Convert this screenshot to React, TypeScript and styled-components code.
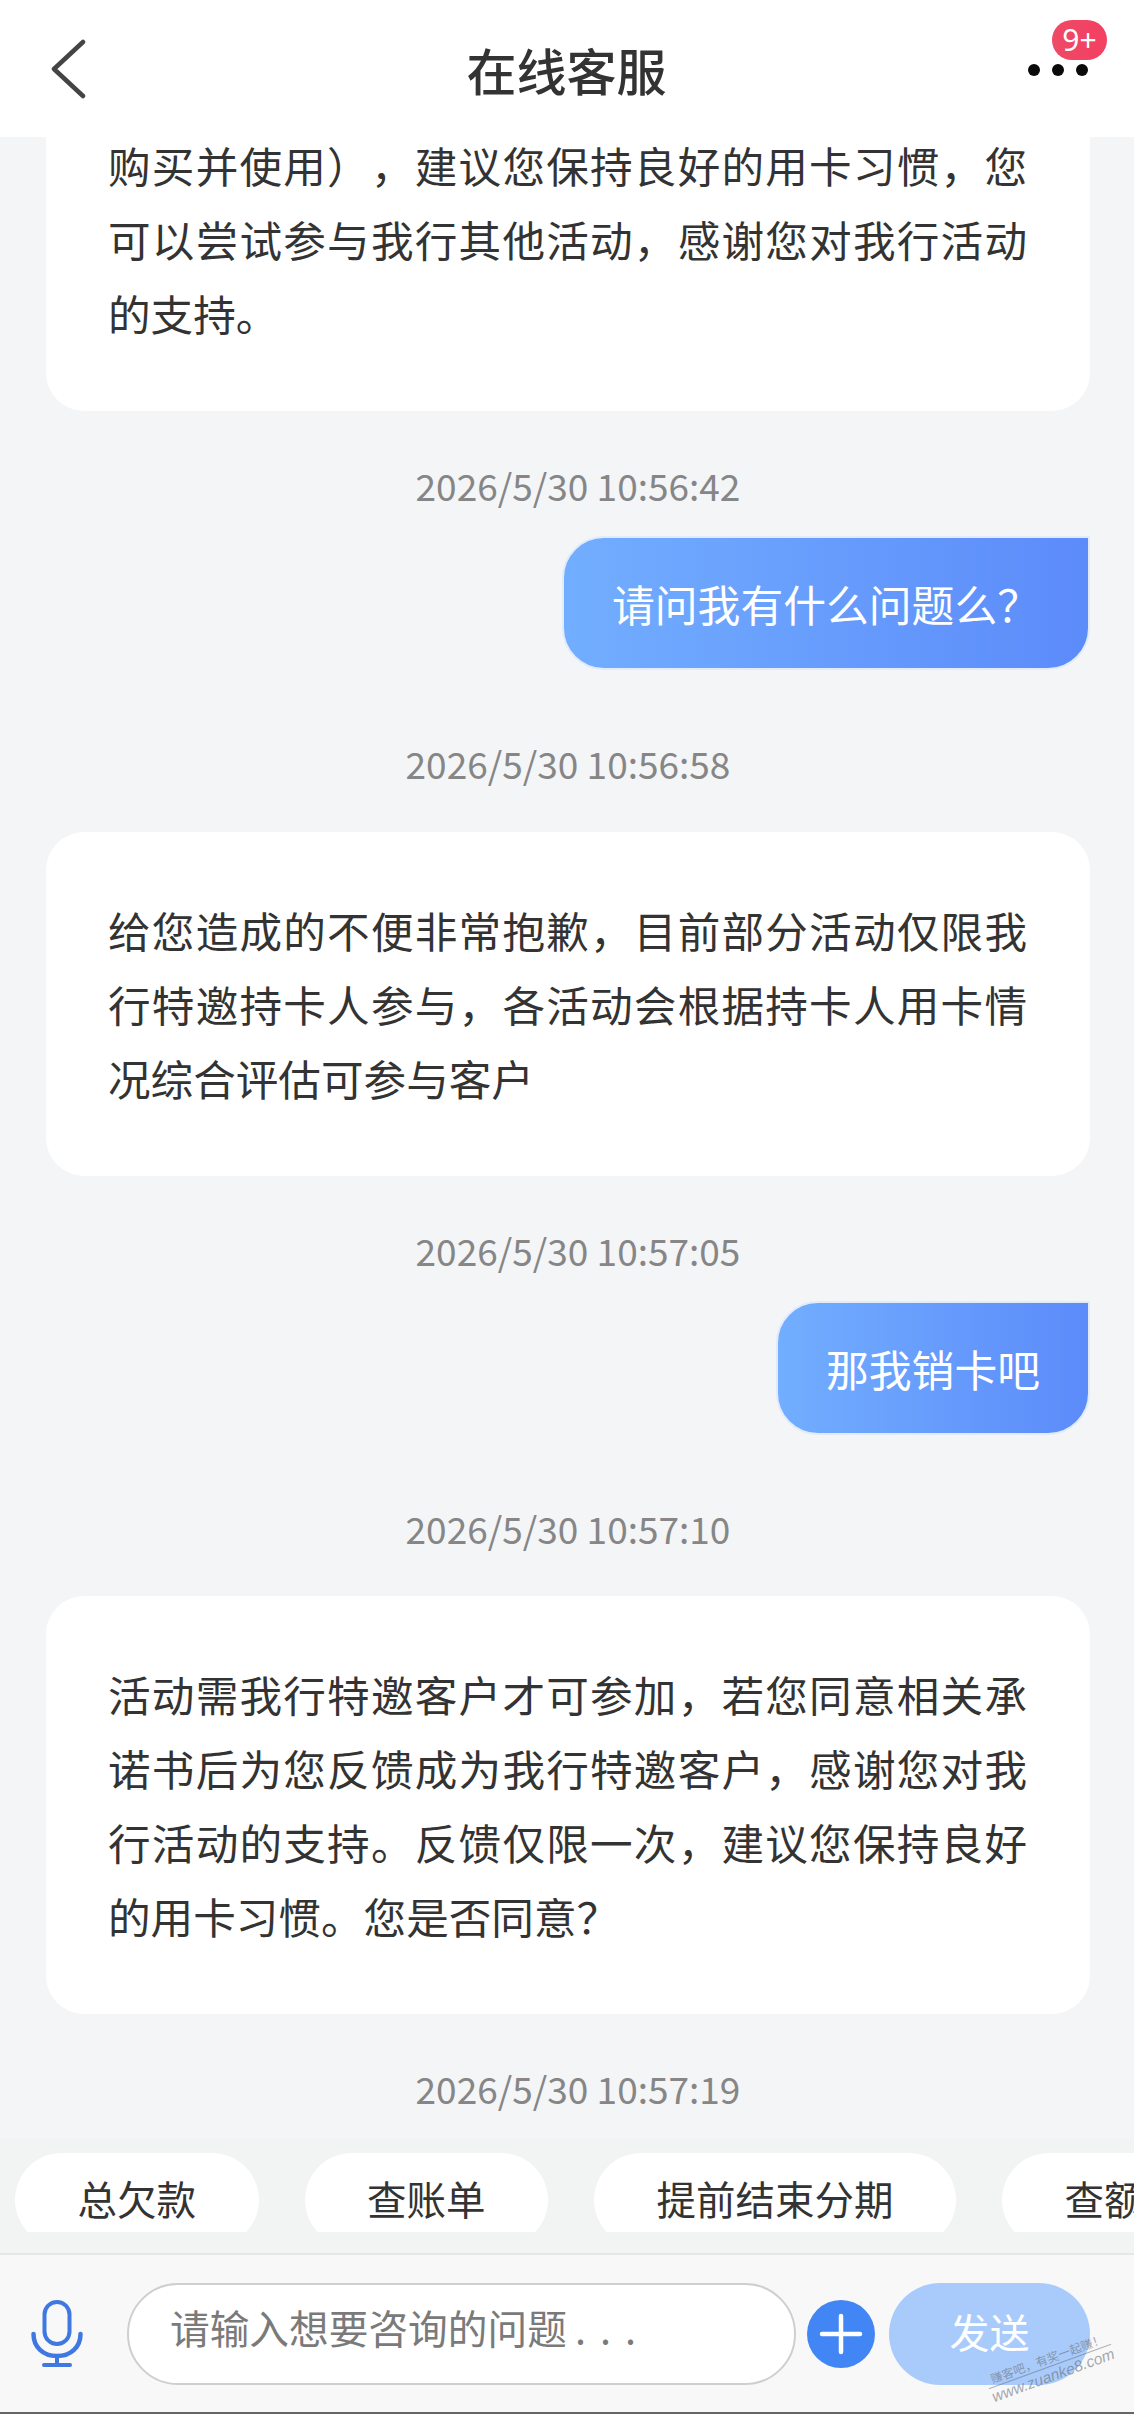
import React from "react";
import styled, { createGlobalStyle } from "styled-components";

const Global = createGlobalStyle`
  html, body { margin: 0; padding: 0; background: #f4f5f7; }
  body { font-family: "Noto Sans CJK SC", "Noto Sans", sans-serif; }
`;

const Page = styled.div`
  position: relative;
  width: 1134px;
  height: 2414px;
  display: flex;
  flex-direction: column;
  overflow: hidden;
  background: #f4f5f7;
  color: #333;
`;

const Header = styled.header`
  flex: 0 0 137px;
  position: relative;
  z-index: 1;
  display: grid;
  grid-template-columns: 1fr auto 1fr;
  align-items: center;
  padding: 0 46px 0 49px;
  background: #fff;
`;

const Title = styled.h1`
  margin: 0;
  font-size: 50px;
  line-height: 1;
  font-weight: 500;
  color: #333;
  position: relative;
  left: -2px;
`;

const BackIcon = styled.svg`
  width: 38px;
  height: 60px;
  display: block;
`;

const More = styled.div`
  position: relative;
  justify-self: end;
  width: 60px;
  display: flex;
  justify-content: space-between;
  padding-top: 3px;
`;

const Dot = styled.span`
  width: 12px;
  height: 12px;
  border-radius: 50%;
  background: #0a0a0a;
`;

const Badge = styled.span`
  position: absolute;
  left: 24px;
  top: -41px;
  width: 55px;
  height: 40px;
  border-radius: 20px;
  background: linear-gradient(90deg, #ee4a66, #f43f62);
  color: #fff;
  font-size: 30px;
  line-height: 40px;
  text-align: center;
  font-family: "Noto Sans", sans-serif;
`;

const Feed = styled.main`
  flex: 1 1 0;
  min-height: 0;
  overflow: hidden;
  display: flex;
  flex-direction: column;
  padding: 0 44px 0 46px;
`;

const Card = styled.section<{ $clipped?: boolean }>`
  flex: none;
  background: #fff;
  border-radius: ${(p) => (p.$clipped ? "0 0 38px 38px" : "38px")};
  margin-top: ${(p) => (p.$clipped ? "-9px" : "17.5px")};
  padding: ${(p) => (p.$clipped ? "0" : "61px")} 63px 61px 62px;
`;

const Paragraph = styled.p`
  margin: 0;
  font-size: 42.6px;
  line-height: 74px;
  color: #333;
  text-align: justify;
  text-justify: inter-character;
  text-spacing-trim: space-all;
`;

const Time = styled.div<{ $outgoing?: boolean }>`
  flex: none;
  height: 44px;
  line-height: 44px;
  margin-top: 52px;
  margin-bottom: 29px;
  text-align: center;
  font-size: 37px;
  color: #868686;
  padding-left: ${(p) => (p.$outgoing ? "20px" : "0")};
`;

const Bubble = styled.div`
  flex: none;
  align-self: flex-end;
  box-sizing: border-box;
  height: 134px;
  margin-bottom: 19px;
  padding: 0 48px;
  display: flex;
  align-items: center;
  font-size: 42.8px;
  line-height: 74px;
  white-space: nowrap;
  color: #fff;
  background: linear-gradient(90deg, #72aeff, #5c8bfa);
  border: 2px solid #e1ebfb;
  border-radius: 42px 0 42px 42px;
`;

const QuickBar = styled.div`
  flex: 0 0 116px;
  box-sizing: border-box;
  padding-top: 14px;
  background: #f2f3f3;
  border-bottom: 2px solid #e6e6e6;
  overflow: hidden;
`;

const Chips = styled.div`
  display: flex;
  gap: 46px;
  height: 79px;
  padding-left: 15px;
  overflow: hidden;
`;

const Chip = styled.span`
  flex: none;
  height: 94px;
  padding: 0 62.5px;
  border-radius: 47px;
  background: #fff;
  font-size: 39.5px;
  line-height: 90px;
  color: #333;
`;

const InputBar = styled.div`
  flex: 0 0 159px;
  box-sizing: border-box;
  display: flex;
  align-items: center;
  padding: 0 44px 0 31px;
  background: #f8f8f8;
  border-bottom: 2px solid #666;
`;

const MicIcon = styled.svg`
  width: 52px;
  height: 67px;
  flex: none;
  margin-right: 44px;
`;

const Field = styled.div`
  flex: none;
  box-sizing: border-box;
  width: 669px;
  height: 102px;
  border: 2px solid #cfcfcf;
  border-radius: 51px;
  background: #fff;
  padding-left: 41px;
  font-size: 39.7px;
  line-height: 84px;
  color: #7a7a7a;
  white-space: nowrap;
`;

const Ellipsis = styled.span`
  letter-spacing: 14px;
  margin-left: 8px;
`;

const PlusIcon = styled.svg`
  width: 68px;
  height: 68px;
  flex: none;
  margin-left: 11px;
`;

const Send = styled.button`
  flex: none;
  width: 201px;
  height: 102px;
  margin-left: 14px;
  border: 0;
  padding: 0 0 6px;
  border-radius: 51px;
  background: #a9cbfb;
  color: #fff;
  font-family: inherit;
  font-size: 40px;
`;

const Watermark = styled.div`
  position: absolute;
  left: 985px;
  top: 2349px;
  width: 130px;
  transform: rotate(-20deg);
  transform-origin: center;
  color: rgba(105, 110, 120, 0.6);
  text-align: center;
  white-space: nowrap;
`;

const MarkTop = styled.div`
  font-size: 12px;
  line-height: 17px;
  border-bottom: 1px solid rgba(105, 110, 120, 0.5);
`;

const MarkBottom = styled.div`
  font-size: 15.5px;
  line-height: 17px;
  font-family: "Liberation Sans", sans-serif;
  font-style: italic;
`;

export default function App() {
  return (
    <Page>
      <Global />
      <Header>
        <BackIcon viewBox="0 0 38 60" fill="none">
          <path d="M34 3 L5 30 L34 57" stroke="#444" strokeWidth="4.5" strokeLinecap="round" strokeLinejoin="round" />
        </BackIcon>
        <Title>在线客服</Title>
        <More>
          <Dot />
          <Dot />
          <Dot />
          <Badge>9+</Badge>
        </More>
      </Header>
      <Feed>
        <Card $clipped>
          <Paragraph>购买并使用），建议您保持良好的用卡习惯，您可以尝试参与我行其他活动，感谢您对我行活动的支持。</Paragraph>
        </Card>
        <Time $outgoing>2026/5/30 10:56:42</Time>
        <Bubble>请问我有什么问题么？</Bubble>
        <Time>2026/5/30 10:56:58</Time>
        <Card>
          <Paragraph>给您造成的不便非常抱歉，目前部分活动仅限我行特邀持卡人参与，各活动会根据持卡人用卡情况综合评估可参与客户</Paragraph>
        </Card>
        <Time $outgoing>2026/5/30 10:57:05</Time>
        <Bubble>那我销卡吧</Bubble>
        <Time>2026/5/30 10:57:10</Time>
        <Card>
          <Paragraph>活动需我行特邀客户才可参加，若您同意相关承诺书后为您反馈成为我行特邀客户，感谢您对我行活动的支持。反馈仅限一次，建议您保持良好的用卡习惯。您是否同意？</Paragraph>
        </Card>
        <Time $outgoing>2026/5/30 10:57:19</Time>
      </Feed>
      <QuickBar>
        <Chips>
          <Chip>总欠款</Chip>
          <Chip>查账单</Chip>
          <Chip>提前结束分期</Chip>
          <Chip>查额度</Chip>
        </Chips>
      </QuickBar>
      <InputBar>
        <MicIcon viewBox="0 0 52 67" fill="none">
          <rect x="13.5" y="2" width="25" height="42" rx="12.5" stroke="#3f78e0" strokeWidth="4" />
          <path d="M2.5 34 C2.5 47 12 56 26 56 C40 56 49.5 47 49.5 34" stroke="#3f78e0" strokeWidth="4.5" strokeLinecap="round" />
          <path d="M26 56 V64 M13 65 H39" stroke="#3f78e0" strokeWidth="4" strokeLinecap="round" />
        </MicIcon>
        <Field>
          请输入想要咨询的问题<Ellipsis>...</Ellipsis>
        </Field>
        <PlusIcon viewBox="0 0 68 68" fill="none">
          <circle cx="34" cy="34" r="34" fill="#4285f4" />
          <path d="M34 16 V52 M15 34 H53" stroke="#fff" strokeWidth="4.5" strokeLinecap="round" />
        </PlusIcon>
        <Send>发送</Send>
      </InputBar>
      <Watermark>
        <MarkTop>赚客吧，有奖一起赚！</MarkTop>
        <MarkBottom>www.zuanke8.com</MarkBottom>
      </Watermark>
    </Page>
  );
}
